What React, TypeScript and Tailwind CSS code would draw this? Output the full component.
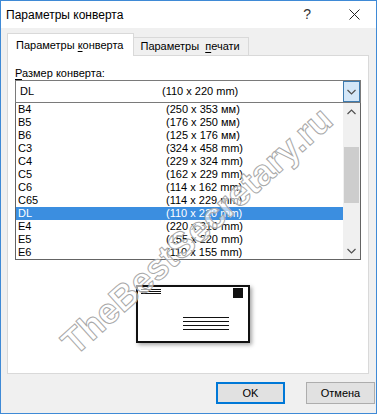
import React from "react";

/* envelope sizes shown in the open dropdown */
const SIZES = [
  ["B4", "(250 x 353 мм)"],
  ["B5", "(176 x 250 мм)"],
  ["B6", "(125 x 176 мм)"],
  ["C3", "(324 x 458 mm)"],
  ["C4", "(229 x 324 mm)"],
  ["C5", "(162 x 229 mm)"],
  ["C6", "(114 x 162 mm)"],
  ["C65", "(114 x 229 mm)"],
  ["DL", "(110 x 220 mm)"],
  ["E4", "(220 x 310 mm)"],
  ["E5", "(155 x 220 mm)"],
  ["E6", "(110 x 155 mm)"],
];

const SELECTED = "DL";

function Chevron({ up = false }: { up?: boolean }) {
  return (
    <svg width="9" height="6" viewBox="0 0 9 6" fill="none">
      <path
        d={up ? "M0.5 5 L4.5 1 L8.5 5" : "M0.5 1 L4.5 5 L8.5 1"}
        stroke="#505050"
        strokeWidth="1.2"
      />
    </svg>
  );
}

function Envelope() {
  return (
    <div className="w-[114px] h-[58px] shadow-[2px_2px_4px_rgba(0,0,0,0.35)]">
      <svg width="114" height="58" viewBox="0 0 114 58">
        <rect x="1" y="1" width="112" height="56" fill="#fff" stroke="#111" strokeWidth="2" />
        {/* return address */}
        <line x1="5" y1="4.5" x2="25" y2="4.5" stroke="#111" />
        <line x1="5" y1="6.5" x2="25" y2="6.5" stroke="#111" />
        <line x1="5" y1="8.5" x2="25" y2="8.5" stroke="#111" />
        {/* stamp */}
        <rect x="97" y="3" width="10" height="10" fill="#111" />
        {/* address */}
        <line x1="47" y1="32.5" x2="93" y2="32.5" stroke="#111" />
        <line x1="47" y1="36.5" x2="93" y2="36.5" stroke="#111" />
        <line x1="47" y1="40.5" x2="93" y2="40.5" stroke="#111" />
        <line x1="47" y1="44.5" x2="93" y2="44.5" stroke="#111" />
      </svg>
    </div>
  );
}

export default function App() {
  return (
    <div className="relative w-[377px] h-[414px] overflow-hidden border border-[#3f8ad6] bg-[#f0f0f0] flex flex-col text-black font-['Liberation_Sans',Arial,sans-serif]">
      {/* TITLE BAR */}
      <div className="h-[27px] shrink-0 bg-white flex items-center pl-[5px] text-[12px]">
        <span>Параметры конверта</span>
        <span className="ml-auto text-[14px] text-[#333] font-light">?</span>
        <svg className="ml-[38px] mr-[16px]" width="11" height="11" viewBox="0 0 11 11">
          <path d="M0.5 0.5 L10.5 10.5 M10.5 0.5 L0.5 10.5" stroke="#222" strokeWidth="1" />
        </svg>
      </div>

      {/* TABS */}
      <div className="mt-[5px] h-[22px] shrink-0 pl-[6px] flex items-end text-[11px]">
        <div className="relative z-10 -mb-px h-[23px] bg-white border border-b-0 border-[#d9d9d9] pl-[8px] pr-[10px] flex items-center">
          Параметры&nbsp;<span className="underline underline-offset-2">к</span>онверта
        </div>
        <div className="h-[18px] border border-b-0 border-l-0 border-[#d9d9d9] pl-[6px] pr-[8px] flex items-center">
          Параметры&nbsp;&nbsp;<span className="underline underline-offset-2">п</span>ечати
        </div>
      </div>

      {/* PANEL */}
      <div className="ml-[6px] w-[362px] h-[319px] shrink-0 bg-white border border-[#d9d9d9] flex flex-col px-[7px] pt-[10px] text-[11px]">
        <div className="leading-[14px]">
          <span className="underline underline-offset-2">Р</span>азмер конверта:
        </div>

        {/* combobox */}
        <div className="w-[346px] h-[23px] border border-[#7a7a7a] flex items-center">
          <span className="w-[146px] pl-[4px]">DL</span>
          <span>(110 x 220 mm)</span>
          <div className="ml-auto h-full w-[17px] bg-[#d4e7f8] border border-[#3d7bb0] flex items-center justify-center">
            <Chevron />
          </div>
        </div>

        {/* dropdown list */}
        <div className="w-[346px] h-[157px] border border-t-0 border-[#646464] flex">
          <div className="flex-1 flex flex-col">
            {SIZES.map(([name, size]) => (
              <div
                key={name}
                className={
                  name === SELECTED
                    ? "h-[13px] leading-[13px] flex bg-[#3b8ee0] text-white"
                    : "h-[13px] leading-[13px] flex"
                }
              >
                <span className="w-[150px] pl-[2px]">{name}</span>
                <span>{size}</span>
              </div>
            ))}
          </div>
          <div className="w-[17px] bg-[#f0f0f0] flex flex-col items-center">
            <div className="h-[17px] flex items-center justify-center">
              <Chevron up />
            </div>
            <div className="mt-[27px] w-[15px] h-[56px] bg-[#cdcdcd]" />
            <div className="mt-auto h-[17px] flex items-center justify-center">
              <Chevron />
            </div>
          </div>
        </div>

        <div className="mt-[25px] ml-[121px]">
          <Envelope />
        </div>
      </div>

      {/* BUTTONS */}
      <div className="mt-[8px] flex justify-end gap-[21px] pr-[1px] text-[11px]">
        <button className="w-[69px] h-[22px] bg-[#e1e1e1] border border-[#0078d7] outline outline-1 -outline-offset-2 outline-[#0078d7]">
          OK
        </button>
        <button className="w-[69px] h-[22px] bg-[#e1e1e1] border border-[#adadad]">
          Отмена
        </button>
      </div>

      {/* WATERMARK */}
      <div className="pointer-events-none absolute left-[196px] top-[230px] -translate-x-1/2 -translate-y-1/2 -rotate-[42deg] whitespace-nowrap text-[36px] font-bold leading-none text-white/60 [-webkit-text-stroke:1px_#a8a8a8]">
        TheBestSecretary.ru
      </div>
    </div>
  );
}
